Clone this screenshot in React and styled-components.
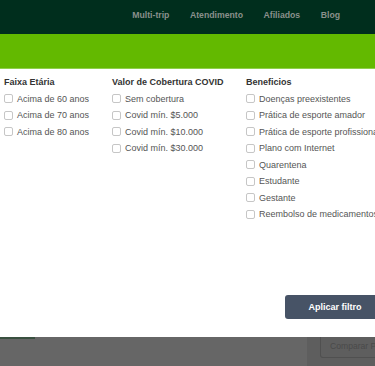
import React from 'react'
import styled, { createGlobalStyle } from 'styled-components'

const GlobalStyle = createGlobalStyle`
  html, body {
    margin: 0;
    padding: 0;
    background: #666666;
    font-family: "Liberation Sans", Arial, sans-serif;
  }
  #root {
    width: 375px;
    overflow: hidden;
  }
`

const filters = [
  {
    title: 'Faixa Etária',
    width: 108,
    items: ['Acima de 60 anos', 'Acima de 70 anos', 'Acima de 80 anos'],
  },
  {
    title: 'Valor de Cobertura COVID',
    width: 134,
    items: ['Sem cobertura', 'Covid mín. $5.000', 'Covid mín. $10.000', 'Covid mín. $30.000'],
  },
  {
    title: 'Beneficios',
    width: 150,
    items: [
      'Doenças preexistentes',
      'Prática de esporte amador',
      'Prática de esporte profissional',
      'Plano com Internet',
      'Quarentena',
      'Estudante',
      'Gestante',
      'Reembolso de medicamentos',
    ],
  },
]

const navLinks = ['Multi-trip', 'Atendimento', 'Afiliados', 'Blog']

const App = () => {
  return (
    <Page>
      <GlobalStyle />
      <Header>
        <Nav>
          {navLinks.map((l) => (
            <NavLink key={l}>{l}</NavLink>
          ))}
        </Nav>
      </Header>
      <Banner />
      <FilterPanel>
        <Columns>
          {filters.map((group) => (
            <Column key={group.title} $width={group.width}>
              <Title>{group.title}</Title>
              {group.items.map((item) => (
                <Option key={item}>
                  <Box />
                  {item}
                </Option>
              ))}
            </Column>
          ))}
        </Columns>
        <Footer>
          <ApplyButton>Aplicar filtro</ApplyButton>
        </Footer>
      </FilterPanel>
      <Behind>
        <MainArea>
          <Underline />
        </MainArea>
        <Side>
          <CompareButton>Comparar Planos</CompareButton>
        </Side>
      </Behind>
    </Page>
  )
}

const Page = styled.div`
  width: 375px;
  height: 366px;
  overflow: hidden;
  display: flex;
  flex-direction: column;
`

const Header = styled.header`
  height: 34px;
  box-sizing: border-box;
  background: #002e1d;
  display: flex;
  justify-content: flex-end;
  align-items: center;
  padding: 0 35px 4px 0;
`

const Nav = styled.nav`
  display: flex;
  gap: 20.5px;
`

const NavLink = styled.span`
  font-size: 8.7px;
  font-weight: 700;
  color: #8a908c;
`

const Banner = styled.div`
  height: 34px;
  background: #63b900;
  border-bottom: 1px solid #8fcf4a;
`

const FilterPanel = styled.section`
  width: 385px;
  height: 268px;
  flex-shrink: 0;
  box-sizing: border-box;
  background: #ffffff;
  padding: 5px 0 18px 4px;
  display: flex;
  flex-direction: column;
`

const Columns = styled.div`
  display: flex;
`

const Column = styled.div`
  width: ${(p) => p.$width}px;
  flex-shrink: 0;
  display: flex;
  flex-direction: column;
`

const Title = styled.div`
  height: 16.5px;
  line-height: 16.5px;
  font-size: 9px;
  font-weight: 700;
  color: #333333;
  white-space: nowrap;
`

const Option = styled.label`
  height: 16.5px;
  display: flex;
  align-items: center;
  gap: 4px;
  font-size: 9px;
  color: #555555;
  white-space: nowrap;
`

const Box = styled.span`
  width: 9px;
  height: 9px;
  box-sizing: border-box;
  border: 1px solid #c6c6c6;
  border-radius: 2px;
  flex-shrink: 0;
`

const Footer = styled.div`
  margin-top: auto;
  display: flex;
  justify-content: flex-end;
`

const ApplyButton = styled.button`
  width: 100px;
  height: 24px;
  border: none;
  border-radius: 3px;
  background: #475366;
  color: #ffffff;
  font-family: inherit;
  font-size: 9px;
  font-weight: 700;
`

const Behind = styled.div`
  flex: 1;
  display: flex;
`

const MainArea = styled.div`
  width: 307px;
  flex-shrink: 0;
  background: #666666;
`

const Underline = styled.div`
  width: 35px;
  height: 2px;
  background: #3a5040;
`

const Side = styled.div`
  flex: 1;
  min-width: 0;
  overflow: hidden;
  background: #5e5e5e;
  padding-left: 13px;
  display: flex;
  align-items: flex-start;
`

const CompareButton = styled.div`
  width: 90px;
  height: 21px;
  flex-shrink: 0;
  box-sizing: border-box;
  border: 1px solid #505050;
  border-top: none;
  border-radius: 0 0 3px 3px;
  padding: 4px 0 0 9px;
  font-size: 8.6px;
  color: #4a4a4a;
  white-space: nowrap;
`

export default App
